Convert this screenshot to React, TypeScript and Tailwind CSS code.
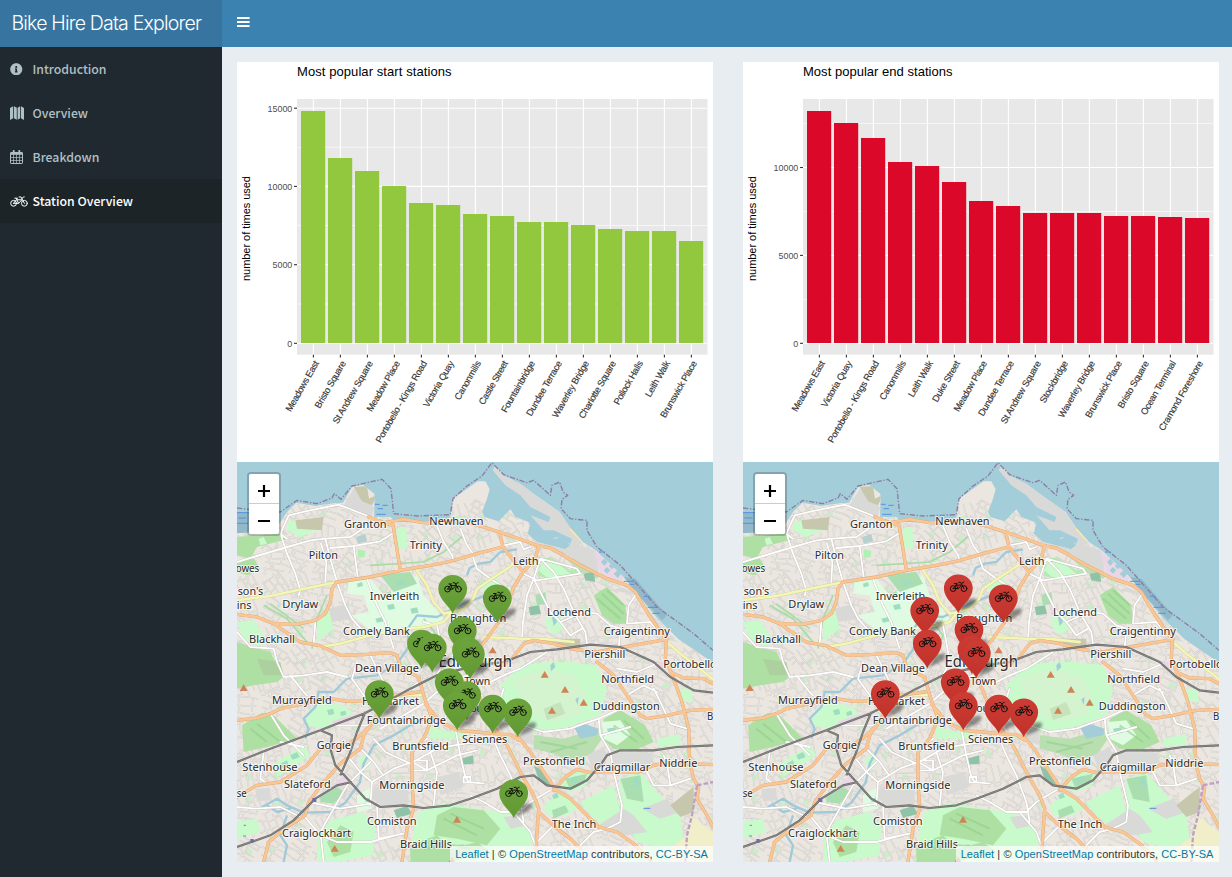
import React from 'react';
import { FaInfoCircle } from 'react-icons/fa';

const HELV = "font-['Liberation_Sans',Arial,sans-serif]";

/* ---------- icons ---------- */

function BikeShape() {
  return (
    <g fill="none" stroke="currentColor" strokeWidth="1" strokeLinecap="round" strokeLinejoin="round">
      <circle cx="3.6" cy="7.3" r="2.9" />
      <circle cx="14.4" cy="7.3" r="2.9" />
      <path d="M3.6 7.3L6.3 3.8H11.9L8.6 7.3H3.6M8.6 7.3L6.2 2.4M4.8 2.2H7.5M14.4 7.3L11 1H9.2M12 2.6L13.4 .9H14.2" />
    </g>
  );
}

function BikeIcon() {
  return (
    <svg width="18" height="11" viewBox="0 0 18 11">
      <BikeShape />
    </svg>
  );
}

function CalendarIcon() {
  return (
    <svg width="13" height="14" viewBox="0 0 13 14" fill="none" stroke="currentColor">
      <rect x=".5" y="2.5" width="12" height="11" rx=".6" />
      <path d="M.5 3.2H12.5M.5 4.2H12.5" strokeWidth="1.2" />
      <path d="M3.5 4V13.5M6.5 4V13.5M9.5 4V13.5M.5 7.5H12.5M.5 10.5H12.5" strokeWidth=".7" />
      <path d="M3.7 .9V3M9.3 .9V3" strokeWidth="1.9" strokeLinecap="round" />
    </svg>
  );
}

function MapIcon() {
  return (
    <svg width="14" height="14" viewBox="0 0 14 14" fill="currentColor">
      <path d="M0 2L3.2 .2V12.2L0 14ZM4 .2L6.8 1.8V13.8L4 12.2ZM7.6 1.8L10.2 .2V12.2L7.6 13.8ZM11 .2L14 2V14L11 12.2Z" />
    </svg>
  );
}

function MenuIcon() {
  return (
    <svg width="13" height="12" viewBox="0 0 13 12">
      <path d="M0 2H12.6M0 6H12.6M0 10H12.6" stroke="#fff" strokeWidth="2" />
    </svg>
  );
}

/* ---------- bar charts ---------- */

type Bar = [name: string, top: number, labelLength: number];
type Tick = [label: string, y: number];

const START_BARS: Bar[] = [
  ['Meadows East', 49, 57], ['Bristo Square', 96, 53], ['St Andrew Square', 109, 71], ['Meadow Place', 124, 57],
  ['Portobello - Kings Road', 141, 93], ['Victoria Quay', 143, 52], ['Canonmills', 152, 43.5], ['Castle Street', 154, 49],
  ['Fountainbridge', 160, 58], ['Dundee Terrace', 160, 62], ['Waverley Bridge', 163, 64], ['Charlotte Square', 167, 65],
  ['Pollock Halls', 169, 49], ['Leith Walk', 169, 40], ['Brunswick Place', 179, 64],
];

const END_BARS: Bar[] = [
  ['Meadows East', 49, 57], ['Victoria Quay', 61, 52], ['Portobello - Kings Road', 76, 93], ['Canonmills', 100, 43.5],
  ['Leith Walk', 104, 40], ['Duke Street', 120, 46], ['Meadow Place', 139, 57], ['Dundee Terrace', 144, 62],
  ['St Andrew Square', 151, 71], ['Stockbridge', 151, 47], ['Waverley Bridge', 151, 64], ['Brunswick Place', 154, 64],
  ['Bristo Square', 154, 53], ['Ocean Terminal', 155, 61], ['Cramond Foreshore', 156, 79],
];

function StationChart({ title, titleLength, bars, color, major, minor }: {
  title: string; titleLength: number; bars: Bar[]; color: string; major: Tick[]; minor: number[];
}) {
  return (
    <svg viewBox="0 0 476 400" className={`block h-[400px] w-[476px] bg-white ${HELV}`}>
      <text x="60" y="14" fontSize="13" textLength={titleLength} fill="#000">{title}</text>
      <rect x="60" y="37" width="410.5" height="255.7" fill="#e8e8e8" />
      {minor.map((y) => <path key={y} d={`M60 ${y}H470.5`} stroke="#fff" strokeWidth=".6" />)}
      {major.map(([label, y]) => <path key={label} d={`M60 ${y}H470.5`} stroke="#fff" strokeWidth="1.1" />)}
      {bars.map(([name], i) => <path key={name} d={`M${76.4 + 27 * i} 37V292.7`} stroke="#fff" strokeWidth="1.1" />)}
      {bars.map(([name, top], i) => (
        <rect key={name} x={64 + 27 * i} y={top} width="24.2" height={281 - top} fill={color} />
      ))}
      {major.map(([label, y]) => (
        <g key={label}>
          <path d={`M57 ${y}H60`} stroke="#333" strokeWidth="1.1" />
          <text x="55.3" y={y + 3.4} fontSize="9.3" textAnchor="end" textLength={label.length * 4.95} lengthAdjust="spacingAndGlyphs" fill="#4d4d4d">{label}</text>
        </g>
      ))}
      {bars.map(([name, , length], i) => (
        <g key={name}>
          <path d={`M${76.4 + 27 * i} 292.7V295.6`} stroke="#333" strokeWidth="1.1" />
          <text
            fontSize="9.3"
            textAnchor="end"
            textLength={length}
            fill="#333"
            stroke="#333"
            strokeWidth=".15"
            transform={`translate(${82.3 + 27 * i} 301) rotate(-60)`}
          >
            {name}
          </text>
        </g>
      ))}
      <text fontSize="11" textAnchor="middle" textLength="105" transform="translate(13 166.5) rotate(-90)">
        number of times used
      </text>
    </svg>
  );
}

/* ---------- map: drawn on a 1428 x 1200 grid ---------- */

type Pt = [number, number];

const LAND =
  'M0 214L70 210L125 188L150 150L178 122L235 132L290 124L318 122L345 75L378 68L412 95L414 166L460 164L475 180L560 181L600 192L640 166L648 110L690 80L722 58L745 58L758 82L750 110L735 150L742 165L785 178L820 142L835 165L880 182L872 215L900 240L985 262L1000 250L978 225L952 230L920 208L880 160L845 130L815 80L768 25L775 10L798 40L850 65L890 95L968 150L1000 198L1038 240L1078 266L1160 345L1195 390L1262 470L1325 532L1428 602V1200H0Z';

const AREAS: [string, string][] = [
  ['#d9d9d8', 'M768 25L775 10L798 40L850 65L890 95L968 150L1000 198L1038 240L1010 262L1040 300L930 252L900 240L985 262L1000 250L978 225L952 230L920 208L880 160L845 130L815 80Z'],
  ['#d9d9d8', 'M1000 240L1078 266L1085 335L1000 285Z'],
  ['#ead7e6', 'M1070 260L1160 345L1155 362L1090 338Z'],
  ['#d9d9d8', 'M1150 375L1200 395L1290 520L1325 540L1280 532L1228 450L1190 398L1130 385Z'],
  ['#fae8ae', 'M998 190L1040 236L1033 240L1000 205Z'],
  ['#d9d9d8', 'M320 130L350 80L378 90L395 120L410 135L405 165L370 150Z'],
  ['#c6c7ac', 'M350 75L390 72L396 110L420 98L405 130L375 118Z'],
  ['#9cc4d8', 'M412 122H460V164H412Z'],
  ['#c8facc', 'M150 180L195 170L240 205L190 225L150 205Z'],
  ['#c6c7ac', 'M175 175L260 165L255 205L180 200Z'],
  ['#aedfa3', 'M0 225L130 215L150 232L60 255L40 290L0 280Z'],
  ['#aedfa3', 'M0 300L50 290L70 320L30 340L0 330Z'],
  ['#c8facc', 'M65 230L80 225L90 245L70 250Z'],
  ['#c8facc', 'M478 200L508 195L512 260L482 258Z'],
  ['#dffce2', 'M335 360L400 350L440 400L540 340L560 400L620 470L600 490L520 500L420 520L345 460L395 450L380 400L330 395Z'],
  ['#aaddb0', 'M430 340L520 330L540 365L470 390Z'],
  ['#b0f0b4', 'M362 262L385 266L383 285L362 288Z'],
  ['#b5d0d0', 'M358 225L385 215L390 238L362 245Z'],
  ['#d8d8d6', 'M275 440L330 425L345 470L285 480Z'],
  ['#c8facc', 'M0 480L50 475L90 530L70 555L20 535Z'],
  ['#aedfa3', 'M0 540L100 570L140 645L120 660L50 670L0 680Z'],
  ['#add19e', 'M60 590L130 600L140 640L80 640Z'],
  ['#c8facc', 'M240 480L275 440L290 500L240 540Z'],
  ['#aedfa3', 'M15 790L75 752L110 760L180 830L90 855L20 870Z'],
  ['#c8facc', 'M215 745L260 715L330 735L360 770L260 800L205 790Z'],
  ['#ead7e6', 'M285 778L380 748L380 758L330 785L290 792Z'],
  ['#ead7e6', 'M270 980L320 942L345 962L255 1005Z'],
  ['#c8facc', 'M365 890L395 870L395 920L372 918Z'],
  ['#c8facc', 'M110 905L200 850L220 880L160 920L120 945Z'],
  ['#aaddb0', 'M250 1000L300 975L325 990L290 1025L250 1020Z'],
  ['#d9d9d8', 'M410 975L515 970L515 1025L450 1040L405 1010Z'],
  ['#d9d9d8', 'M600 945L665 930L680 975L610 1000Z'],
  ['#dffce2', 'M360 1000L405 975L405 1040L360 1050Z'],
  ['#c8facc', 'M240 1130L280 1075L380 1050L415 1090L410 1180L300 1200L240 1200Z'],
  ['#aedfa3', 'M270 1140L310 1090L350 1110L340 1170L290 1185Z'],
  ['#c8facc', 'M0 1080L60 1070L70 1110L0 1130Z'],
  ['#c8facc', 'M545 1050L620 1022L720 1040L800 1050L850 1070L890 1130L870 1200H520L530 1100Z'],
  ['#aedfa3', 'M600 1060L650 1035L740 1045L790 1100L750 1150L660 1130L590 1120Z'],
  ['#aedfa3', 'M520 1150L600 1120L640 1160L720 1140L760 1170L640 1200H520Z'],
  ['#d9d9d8', 'M800 1065L850 1060L870 1090L820 1100Z'],
  ['#8fc3a7', 'M470 1045L510 1032L525 1055L480 1068Z'],
  ['#8fc3a7', 'M672 890L708 880L710 905L675 908Z'],
  ['#c8facc', 'M570 790L640 810L660 800L700 810L680 830L580 830Z'],
  ['#d9d9d8', 'M850 800L885 805L890 850L850 835Z'],
  ['#b8e8b6', 'M900 340L920 290L940 285L1000 325L1035 320L1030 340L930 350Z'],
  ['#c8facc', 'M905 325L920 295L970 310L1000 335L930 348Z'],
  ['#bfdcb5', 'M980 285L1010 290L1090 340L1080 350L1030 330Z'],
  ['#aedfa3', 'M1070 400L1110 375L1165 430L1170 485L1130 485L1095 460Z'],
  ['#8fc3a7', 'M875 435L905 430L912 455L880 460Z'],
  ['#8fc3a7', 'M1040 335L1070 330L1075 360L1045 355Z'],
  ['#aaddb0', 'M895 400L925 390L930 425L900 430Z'],
  ['#c8facc', 'M930 455L970 450L980 500L950 520L925 490Z'],
  ['#c8facc', 'M735 370L780 345L800 380L750 430L740 400Z'],
  ['#c6c7ac', 'M960 530L1030 530L1030 560L960 555Z'],
  ['#c8facc', 'M790 670L850 610L940 600L1000 600L1080 610L1110 680L1090 760L1010 790L940 810L870 800L820 760L795 720Z'],
  ['#d4f3cf', 'M830 650L920 620L1010 640L1050 700L1030 760L950 780L860 750Z'],
  ['#c6e3bb', 'M920 740L970 720L985 755L930 775Z'],
  ['#b9dfb0', 'M890 820L980 830L1080 800L1095 830L1060 880L990 895L950 875L890 860Z'],
  ['#aedfa3', 'M1100 770L1150 745L1225 790L1250 840L1200 862L1130 860L1095 830Z'],
  ['#dffce2', 'M1095 780L1150 775L1180 820L1140 850L1100 830Z'],
  ['#d9d9d8', 'M1050 880L1100 855L1110 880L1070 930Z'],
  ['#d9d9d8', 'M1125 870L1240 872L1250 900L1180 930L1130 910Z'],
  ['#c8facc', 'M960 975L1010 930L1070 935L1040 975L1000 990Z'],
  ['#aaddb0', 'M985 950L1050 935L1040 965L1000 985Z'],
  ['#c8facc', 'M920 1030L970 990L1010 1010L1020 1040L990 1060L930 1060Z'],
  ['#aaddb0', 'M945 1045L985 1030L995 1050L950 1070Z'],
  ['#8fc3a7', 'M890 910L930 935L940 975L905 950Z'],
  ['#c8facc', 'M1030 1020L1130 970L1150 1050L1110 1100L1060 1060Z'],
  ['#c8facc', 'M1150 950L1210 930L1260 990L1330 1060L1340 1130L1290 1160L1200 1140L1150 1060Z'],
  ['#d9d9d8', 'M1085 1090L1160 1040L1190 1060L1230 1110L1170 1120L1110 1110Z'],
  ['#aaddb0', 'M1150 950L1210 940L1220 1020L1170 1010Z'],
  ['#d9d9d8', 'M1215 1040L1290 1010L1330 1050L1270 1070Z'],
  ['#c6c7ac', 'M1300 1030L1370 975L1370 1050L1330 1065Z'],
  ['#f0efca', 'M1360 1060L1428 1110V1200H1240L1300 1160L1350 1120Z'],
  ['#ead7e6', 'M1240 600H1280L1275 625Z'],
  ['#c8facc', 'M1225 1150L1290 1160L1300 1200H1150Z'],
  ['#c8facc', 'M1260 830L1330 815L1330 850L1260 855Z'],
  ['#c8facc', 'M1330 680L1360 680L1370 720L1330 720Z'],
  ['#c8facc', 'M0 1085L25 1090L20 1120L0 1118Z'],
  ['#d9d9d8', 'M55 980L100 978V1015L60 1018Z'],
];

const WATER = [
  'M770 70L790 60L850 100L880 135L940 165L935 180L880 160L920 205L950 205L1005 230L1000 245L960 225L940 232L890 200L860 160L830 140L815 100Z',
  'M1010 795L1040 785L1085 800L1080 820L1030 830Z',
  'M940 610L950 600L955 615L942 628Z',
  'M1015 712L1025 705L1022 730Z',
  'M945 465L955 460L960 480L950 492Z',
  'M1092 300L1102 290L1112 300L1102 312ZM1100 325L1110 315L1120 325L1110 335ZM1115 312L1125 302L1135 312L1125 322ZM1130 335L1142 325L1152 337L1142 348Z',
];

const STREAMS = [
  'M75 1035L120 1010L150 1030L200 1052L280 1050L325 1022L368 962L380 905L410 850L470 820L520 790L560 770',
  'M205 830L215 800L200 770L235 735L245 690L290 690L330 650L420 640L480 605L515 555L512 500L540 460L600 465L680 425L745 400M690 340L698 318L725 305L760 300L790 270L840 262',
  'M90 1030L120 1050L160 1040M150 1060L130 1120L150 1150L140 1200',
];

const PRIMARY = [
  'M0 457L60 465L110 485L180 487L235 475L265 455L280 420L285 380L300 360L400 345L490 325L580 310L640 298L720 275L795 255',
  'M110 485L190 540L245 550L310 580L380 578L460 572L480 580L492 620L545 645L560 700L585 770L560 830L525 870L525 960L530 1040L510 1100L495 1200',
  'M395 165L440 182L468 190L478 250L490 325',
  'M440 182L500 172L560 182L640 180L708 185L780 208L840 228L900 250L940 258L980 280L1030 310L1110 350L1170 370L1195 390L1230 450L1270 510L1288 535L1285 590L1310 650L1335 720L1355 800L1358 900L1370 950L1385 975L1380 1010L1410 1060L1428 1095',
  'M788 210L798 255L825 290L858 330L830 375L810 430L785 480L750 530L708 580L690 620L725 700L765 790L790 820L810 850L850 930L890 1000L905 1040L900 1110L895 1200',
  'M905 250L895 290L858 330',
  'M780 620L825 590L860 545L890 535L950 545L1010 562L1080 570L1130 560L1200 548L1290 532',
  'M0 775L60 768L100 755L130 740L200 725L280 710L330 718L420 715L470 700L545 690',
  'M0 1005L60 970L130 960L210 910L250 860L330 850L370 820L400 790L430 755',
  'M80 1200L95 1140L150 1095L205 1060L215 1020L260 960L310 905L370 860L382 815L410 780L430 740',
  'M565 725L610 780L660 805L720 810L770 815L820 818L845 835',
  'M840 820L880 870L920 930L955 982L1000 1010L1050 1060L1085 1095L1140 1110L1190 1145L1240 1195',
  'M950 985L985 945L1020 922L1060 932L1120 928L1200 932L1250 910L1290 903L1428 908',
  'M1080 600L1130 640L1170 700L1210 760L1230 770L1290 760L1360 745L1428 742',
  'M905 1050L960 1100L1000 1130L1030 1160',
  'M1300 630L1340 648L1400 650L1428 665',
];

const SECONDARY = [
  'M0 415L100 402L180 385L290 362',
  'M540 325L570 370L590 420L620 455L680 440L708 410L720 380L780 340L825 310L828 290',
  'M245 555L310 545L400 520L470 505L560 495L620 480L640 455',
  'M740 525L850 530L930 532L1010 540',
  'M1290 540L1330 575L1370 605L1428 652',
  'M470 702L500 698L560 700',
];

const TERTIARY = [
  'M0 300L60 282L140 258L220 235L265 230L340 225L425 168', 'M150 230L130 215L155 160L205 148L270 135L305 128L400 165',
  'M133 222L150 275L175 335L190 385L185 400', 'M265 230L280 290L300 360L325 430L345 470L385 515', 'M265 360L268 300L252 245',
  'M280 258L350 252L430 238L470 212', 'M350 252L362 345', 'M390 350L420 430L445 480L470 560', 'M600 192L620 240L645 280L650 295',
  'M670 200L690 250L708 275', 'M708 285L720 320L760 350L800 375', 'M800 250L850 240L860 262L880 255',
  'M850 330L900 355L1030 335L1020 320L910 290L890 350L870 400L858 480L855 535', 'M910 290L950 330L980 380L1010 450L1045 510L1050 545',
  'M890 350L910 390L940 450L970 480L1000 520L1035 500', 'M970 480L1040 450L1080 455L1120 490', 'M1198 395L1175 430L1170 485L1240 480L1280 530',
  'M1120 490L1150 500L1145 560', 'M120 600L140 645L200 640L270 630L330 645', 'M0 510L40 555L110 560L120 600', 'M235 480L230 545L250 560',
  'M160 640L200 690L210 700', 'M100 755L140 820L200 880', 'M265 800L285 790L400 790L430 745L545 660', 'M430 800L500 760L560 725L600 690',
  'M410 830L445 870L520 905L600 860L650 850L708 842', 'M330 880L370 930L405 960L400 1030', 'M370 860L410 900L435 935',
  'M405 960L470 920L525 900L570 925L660 880L720 865', 'M525 895H570V925H525', 'M655 800L670 880L685 945L695 960L740 965',
  'M680 945V962H700V945Z', 'M760 810L790 880L820 940L850 1020L860 1080', 'M700 1000L740 1020L790 1050L850 1050', 'M850 1050L880 1020L940 985',
  'M420 1035L425 1130L500 1115', 'M215 1020L310 1040L400 1025', 'M0 1035L60 1040L130 1035L190 1065', 'M200 1060L250 1120L300 1140L400 1140L495 1115',
  'M400 900L330 970L290 1040L250 1110L260 1200', 'M80 870L70 950L90 965', 'M130 840L200 855', 'M800 680L780 740L800 780L860 790L920 810L1000 800L1040 785L1085 770L1140 745',
  'M690 640L740 670L800 640L850 620L930 570', 'M1085 770L1090 820L1120 870L1130 930L1155 1030L1150 1080L1110 1100L1070 1110L1020 1160',
  'M1090 820L1180 795', 'M1250 680L1275 730L1300 785L1350 800', 'M1140 620L1200 630L1260 605', 'M1170 700L1220 670L1260 690',
  'M1230 930L1250 970L1300 970L1360 950', 'M1280 880L1290 905L1300 970', 'M830 1050L880 1110L895 1150', 'M900 1140L950 1090L990 1120',
  'M600 640L620 600L610 540L600 490L560 480', 'M600 690L640 660L690 640', 'M360 600L345 650L380 700L420 715', 'M400 580L430 640L460 700',
  'M620 780L640 730L690 710', 'M570 830L540 850', 'M580 870L600 930L590 1030',
];

const RAIL = [
  'M0 900L100 860L250 805L300 785L380 755L430 730L520 680L600 640L720 610L800 600L880 570L960 562L1060 548L1150 555L1250 600L1300 645L1370 685L1428 692',
  'M250 805L285 820L280 860L295 910L340 960L385 1010L430 1035L500 1030L560 1038L640 1030L700 1010L780 980L850 945L890 940L930 970L1000 980L1050 955L1090 910L1110 880L1150 865L1250 865L1320 855L1428 850',
  'M0 1155L100 1120L170 1075L235 1010L300 970L345 960',
  'M385 750L360 810L340 870L310 940',
];

const BOUNDARY =
  'M0 138L60 145L130 150L180 115L240 125L285 108L292 95L312 112L345 72L435 52L462 80L470 155L540 162L640 158L648 110L690 72L735 42L765 2L800 38L870 62L890 55L940 100L945 70L968 60L978 90L992 100L975 112L972 140L1000 170L1050 175L1050 205L1080 255L1150 310L1190 355L1260 435L1370 515L1428 565';

const PEAKS: Pt[] = [[923, 638], [984, 683], [1040, 722], [945, 746], [20, 678], [293, 1160], [660, 1073], [645, 1195], [767, 565]];

const LABELS: [string, number, number, number][] = [
  ['Granton', 322, 448, 197], ['Pilton', 216, 302, 291], ['Trinity', 519, 614, 260], ['Newhaven', 578, 739, 188],
  ['owes', -3, 66, 330], ["son's", 3, 78, 397], ['ins', 0, 43, 440], ['Drylaw', 137, 243, 437], ['Inverleith', 399, 546, 414],
  ['Comely Bank', 319, 518, 519], ['Blackhall', 37, 173, 543], ['Leith', 829, 904, 308], ['Lochend', 931, 1061, 461],
  ['Craigentinny', 1101, 1298, 517], ['Piershill', 1043, 1164, 587], ['Dean Village', 355, 545, 628], ['Murrayfield', 106, 283, 724],
  ['Haymarket', 376, 545, 728], ['Fountainbridge', 390, 626, 784], ['Gorgie', 240, 341, 859], ['Stenhouse', 17, 181, 925],
  ['Slateford', 142, 280, 977], ['se', 0, 28, 1005], ['Morningside', 428, 621, 980], ['Bruntsfield', 467, 634, 864],
  ['Comiston', 391, 538, 1088], ['Craiglockhart', 136, 341, 1125], ['Braid Hills', 490, 644, 1156], ['Sciennes', 676, 810, 842],
  ['Prestonfield', 859, 1043, 909], ['Craigmillar', 1071, 1239, 927], ['Niddrie', 1268, 1380, 915], ['Duddingston', 1068, 1267, 742],
  ['Northfield', 1094, 1250, 661], ['Portobello', 1280, 1438, 617], ['B', 1411, 1428, 773], ['The Inch', 945, 1077, 1096],
  ['Broughton', 640, 807, 480], ['Old Town', 622, 759, 668], ['Southside', 683, 830, 748],
];

/* Residential streets: small skewed grids, one per neighbourhood block. */
function buildStreets(): { streets: string; blocks: string } {
  let seed = 71;
  const rnd = () => {
    seed = (seed * 1103515245 + 12345) % 2147483648;
    return seed / 2147483648;
  };
  const f = (n: number) => n.toFixed(0);
  let streets = '';
  let blocks = '';
  for (let cy = 150; cy < 1220; cy += 72) {
    for (let cx = 20; cx < 1450; cx += 78) {
      const a = rnd() * 1.5;
      const c = Math.cos(a);
      const s = Math.sin(a);
      const x0 = cx + rnd() * 16;
      const y0 = cy + rnd() * 16;
      const at = (u: number, v: number) => `${f(x0 + u * c - v * s)} ${f(y0 + u * s + v * c)}`;
      for (let k = -34; k <= 36; k += 15 + rnd() * 8) {
        streets += `M${at(-26 - rnd() * 12, k)}L${at(rnd() * 12 - 6, k + rnd() * 8 - 4)}L${at(26 + rnd() * 12, k)}`;
        const p = rnd() * 60 - 30;
        streets += `M${at(p, k)}L${at(p, k + 18)}`;
        const q = rnd() * 60 - 30;
        streets += `M${at(q, k)}L${at(q + 2, k + 19)}`;
      }
      if (rnd() > 0.5) {
        const u = rnd() * 30 - 20;
        blocks += `M${at(u, -12)}L${at(u + 18, -12)}L${at(u + 20, 3)}L${at(u, 5)}Z`;
      }
    }
  }
  return { streets, blocks };
}

const { streets: STREETS, blocks: BLOCKS } = buildStreets();

function Lines({ paths, color, width, dash }: { paths: string[]; color: string; width: number; dash?: string }) {
  return (
    <path d={paths.join('')} fill="none" stroke={color} strokeWidth={width} strokeDasharray={dash} strokeLinejoin="round" />
  );
}

function Pin({ x, y, fill, id }: { x: number; y: number; fill: string; id: string }) {
  return (
    <g transform={`translate(${x} ${y + 0.5})`}>
      <path d="M0 38L8 26Q15 22 18.5 25Q19 29 12 33Z" fill="#000" opacity=".4" filter={`url(#soft-${id})`} />
      <path d="M0 38.7C-2 32-14.4 24.5-14.4 14A14.4 14 0 0 1 14.4 14C14.4 24.5 2 32 0 38.7Z" fill={fill} />
      <path d="M0 37C-2 31-13.9 24-13.9 14A13.9 13.5 0 0 1 13.9 14C13.9 24 2 31 0 37Z" fill={`url(#shine-${id})`} />
      <g transform="translate(-8.7 6.8)" color="#111"><BikeShape /></g>
    </g>
  );
}

function StationMap({ id, pins, fill }: { id: string; pins: Pt[]; fill: string }) {
  return (
    <div className="relative h-[400px] w-full overflow-hidden">
      <svg viewBox="0 0 476 400" className="block h-[400px] w-[476px] font-['Noto_Sans',sans-serif]">
        <defs>
          <clipPath id={`land-${id}`}><path d={LAND} /></clipPath>
          <filter id={`soft-${id}`} x="-30%" y="-30%" width="160%" height="160%"><feGaussianBlur stdDeviation="1.5" /></filter>
          <linearGradient id={`shine-${id}`} x1="0" y1="0" x2="0" y2="1">
            <stop offset="0" stopColor="#fff" stopOpacity=".04" />
            <stop offset="1" stopColor="#000" stopOpacity=".05" />
          </linearGradient>
        </defs>
        <g transform="scale(.333333)">
          <rect width="1428" height="1200" fill="#a4cdda" />
          <path d="M0 150L60 155L60 214H0ZM1160 345L1195 350L1290 460L1275 475L1195 390Z" fill="#92b8c9" />
          <g clipPath={`url(#land-${id})`}>
            <rect width="1428" height="1200" fill="#ebe7e0" />
            <path d={BLOCKS} fill="#cdeccb" />
            <Lines paths={[STREETS]} color="#cbc7c2" width={4.4} />
            <Lines paths={[STREETS]} color="#fbfaf8" width={1.6} />
            {AREAS.map(([color, d]) => <path key={d} d={d} fill={color} />)}
            <path d="M1080 410L1150 470M1095 395L1160 455M1110 385L1160 430M40 800L90 840M60 785L130 840M620 1070L720 1120M640 1055L740 1100M1130 790L1200 840M1160 775L1220 830M910 840L1020 860M940 870L1050 840M560 1160L680 1150M600 1140L700 1160" stroke="#8ed08a" strokeWidth="6" opacity=".6" />
            <path d="M80 430L150 470L210 540M100 425L200 500M400 310L560 300L620 270L680 220M270 400L240 470L225 560M560 470L600 520L580 580" fill="none" stroke="#a8dba5" strokeWidth="5" />
            <path d="M360 365L375 360L378 372L362 376ZM440 395L460 388L466 402L446 408ZM450 430L470 425L474 440L455 444ZM475 360L500 352L505 366L480 372ZM415 470L435 465L440 478L420 482ZM520 440L540 436L545 452L524 455ZM385 1010L400 1008V1020H385ZM130 905L150 895L155 910L135 920ZM160 880L180 870L188 885L166 893ZM270 745L288 740L292 756L275 760ZM310 750L325 746L328 758L312 762ZM1110 800L1135 796L1140 812L1115 816ZM1000 950L1018 942L1022 958L1006 964ZM1190 950L1205 948L1208 970H1192ZM945 1000L960 992L966 1006L950 1012Z" fill="#9fdcc0" />
            <Lines paths={STREAMS} color="#a0c9d9" width={7} />
          </g>
          {WATER.map((d) => <path key={d} d={d} fill="#a4cdda" />)}
          <g strokeLinecap="round">
            <Lines paths={TERTIARY} color="#c3beb9" width={7.6} />
            <Lines paths={TERTIARY} color="#ffffff" width={5.5} />
            <Lines paths={SECONDARY} color="#ccd09a" width={9.6} />
            <Lines paths={SECONDARY} color="#f5f6b5" width={7.5} />
            <Lines paths={PRIMARY} color="#dda775" width={10} />
            <Lines paths={PRIMARY} color="#fac794" width={7.8} />
          </g>
          <Lines paths={RAIL} color="#6d6d6d" width={6.5} />
          <Lines paths={RAIL} color="#b0aeac" width={1.2} />
          <Lines paths={[BOUNDARY]} color="#8d7fa3" width={4.2} dash="16 5 4 5" />
          <Lines paths={['M1380 970L1365 1060L1350 1120L1345 1200M1380 970L1428 960']} color="#bfa0c4" width={7} dash="14 6" />
          <path d="M0 152H36M4 168H28M0 184H34M414 127H428M436 130H452M422 140H438M418 157H446M1086 270H1104M1160 358H1192M1178 367H1192M1220 403H1238M1232 436H1262M1246 454H1268M1220 1039H1240M20 1090H27M18 1122H27" stroke="#4f93df" strokeWidth="3" />
          <path d="M226 1008H238V1020H226ZM40 1131H50V1142H40Z" fill="#6b6fae" />
          {PEAKS.map(([x, y]) => <path key={x} d={`M${x - 12} ${y + 9}L${x} ${y - 11}L${x + 12} ${y + 9}Z`} fill="#d08355" />)}
        </g>
        <g fill="#2b2b2b" stroke="#fff" strokeOpacity=".7" strokeWidth="2.2" strokeLinejoin="round" paintOrder="stroke" fontSize="11.6">
          {LABELS.map(([name, x1, x2, y]) => (
            <text key={name} x={x1 / 3 - 0.3} y={y / 3 + 0.2} textLength={(x2 - x1) / 3 + 0.6} lengthAdjust="spacingAndGlyphs">{name}</text>
          ))}
          <text x="201.5" y="204.9" fontSize="15.4" textLength="73.5" lengthAdjust="spacingAndGlyphs">Edinburgh</text>
        </g>
        {pins.map(([x, y]) => <Pin key={`${x}-${y}`} x={x} y={y} fill={fill} id={id} />)}
      </svg>

      <div className="absolute left-[10px] top-[10px] flex flex-col overflow-hidden rounded-[4px] border-2 border-black/20 bg-clip-padding text-black">
        <button className="flex h-[30px] w-[30px] justify-center border-b border-[#ccc] bg-white pt-[11px]" aria-label="Zoom in">
          <svg width="12" height="12" viewBox="0 0 12 12"><path d="M6 0V12M0 6H12" stroke="#000" strokeWidth="2.2" /></svg>
        </button>
        <button className="flex h-[30px] w-[30px] justify-center bg-white pt-[11px]" aria-label="Zoom out">
          <svg width="12" height="12" viewBox="0 0 12 12"><path d="M0 6H12" stroke="#000" strokeWidth="2.2" /></svg>
        </button>
      </div>

      <div className={`absolute bottom-0 right-0 whitespace-nowrap bg-white/70 px-[5px] text-[11px] leading-[16px] tracking-[0.08px] text-[#333] ${HELV}`}>
        <a className="text-[#0078A8]">Leaflet</a> | © <a className="text-[#0078A8]">OpenStreetMap</a> contributors,{' '}
        <a className="text-[#0078A8]">CC-BY-SA</a>
      </div>
    </div>
  );
}

const START_PINS: Pt[] = [
  [215.7, 112.5], [260.3, 122], [225.3, 154.3], [184.5, 167.3], [195.3, 171.3], [229.5, 173.7], [233.3, 177.7],
  [212.3, 206], [142.3, 217.7], [229.7, 218.7], [220.3, 229.3], [255.7, 232.3], [280.7, 236], [276.7, 317],
];

const END_PINS: Pt[] = [
  [215.3, 112], [260.3, 122], [181.7, 134.3], [226, 153.3], [184.3, 167.3], [229, 173], [233.3, 177],
  [212.3, 206], [142.3, 217.7], [220.3, 229.3], [255.7, 232.3], [280.7, 236],
];

/* ---------- page ---------- */

const MENU = [
  { label: 'Introduction', icon: <FaInfoCircle size={12.5} /> },
  { label: 'Overview', icon: <MapIcon /> },
  { label: 'Breakdown', icon: <CalendarIcon /> },
  { label: 'Station Overview', icon: <BikeIcon />, active: true },
];

export default function App() {
  return (
    <div className="flex h-[877px] w-[1232px] flex-col overflow-hidden bg-[#e8edf1]">
      <header className="flex h-[47px] shrink-0 text-white">
        <div className="flex w-[222px] items-center whitespace-nowrap bg-[#37749f] pl-[11.5px] font-['Inter','Liberation_Sans',sans-serif] text-[19.5px] font-light tracking-[-0.8px]">
          Bike Hire Data Explorer
        </div>
        <div className="flex flex-1 items-center bg-[#3b82b1] pb-[3px] pl-[15px]">
          <MenuIcon />
        </div>
      </header>
      <div className="flex min-h-0 flex-1">
        <nav className="flex w-[222px] shrink-0 flex-col bg-[#20292f] font-['Noto_Sans_CJK_SC',sans-serif] text-[12.3px] font-medium">
          {MENU.map((item) => (
            <a
              key={item.label}
              className={
                item.active
                  ? 'flex h-[44px] items-center bg-[#1c2427] pl-[10px] text-white'
                  : 'flex h-[44px] items-center pl-[10px] text-[#b0c0c7]'
              }
            >
              <span className="flex w-[22.5px] shrink-0">{item.icon}</span>
              <span className="whitespace-nowrap">{item.label}</span>
            </a>
          ))}
        </nav>
        <main className="flex gap-[30px] pl-[15px] pt-[15px]">
          <section className="flex w-[476px] flex-col">
            <StationChart
              title="Most popular start stations"
              titleLength={154.5}
              bars={START_BARS}
              color="#91c83e"
              major={[['15000', 46.2], ['10000', 124.4], ['5000', 202.7], ['0', 281.3]]}
              minor={[85.3, 163.5, 242]}
            />
            <StationMap id="start" pins={START_PINS} fill="#66a034" />
          </section>
          <section className="flex w-[475.5px] flex-col overflow-hidden">
            <StationChart
              title="Most popular end stations"
              titleLength={149.5}
              bars={END_BARS}
              color="#db0829"
              major={[['10000', 105.5], ['5000', 193.4], ['0', 281.3]]}
              minor={[61.5, 149.5, 237.3]}
            />
            <StationMap id="end" pins={END_PINS} fill="#ca342c" />
          </section>
        </main>
      </div>
    </div>
  );
}
